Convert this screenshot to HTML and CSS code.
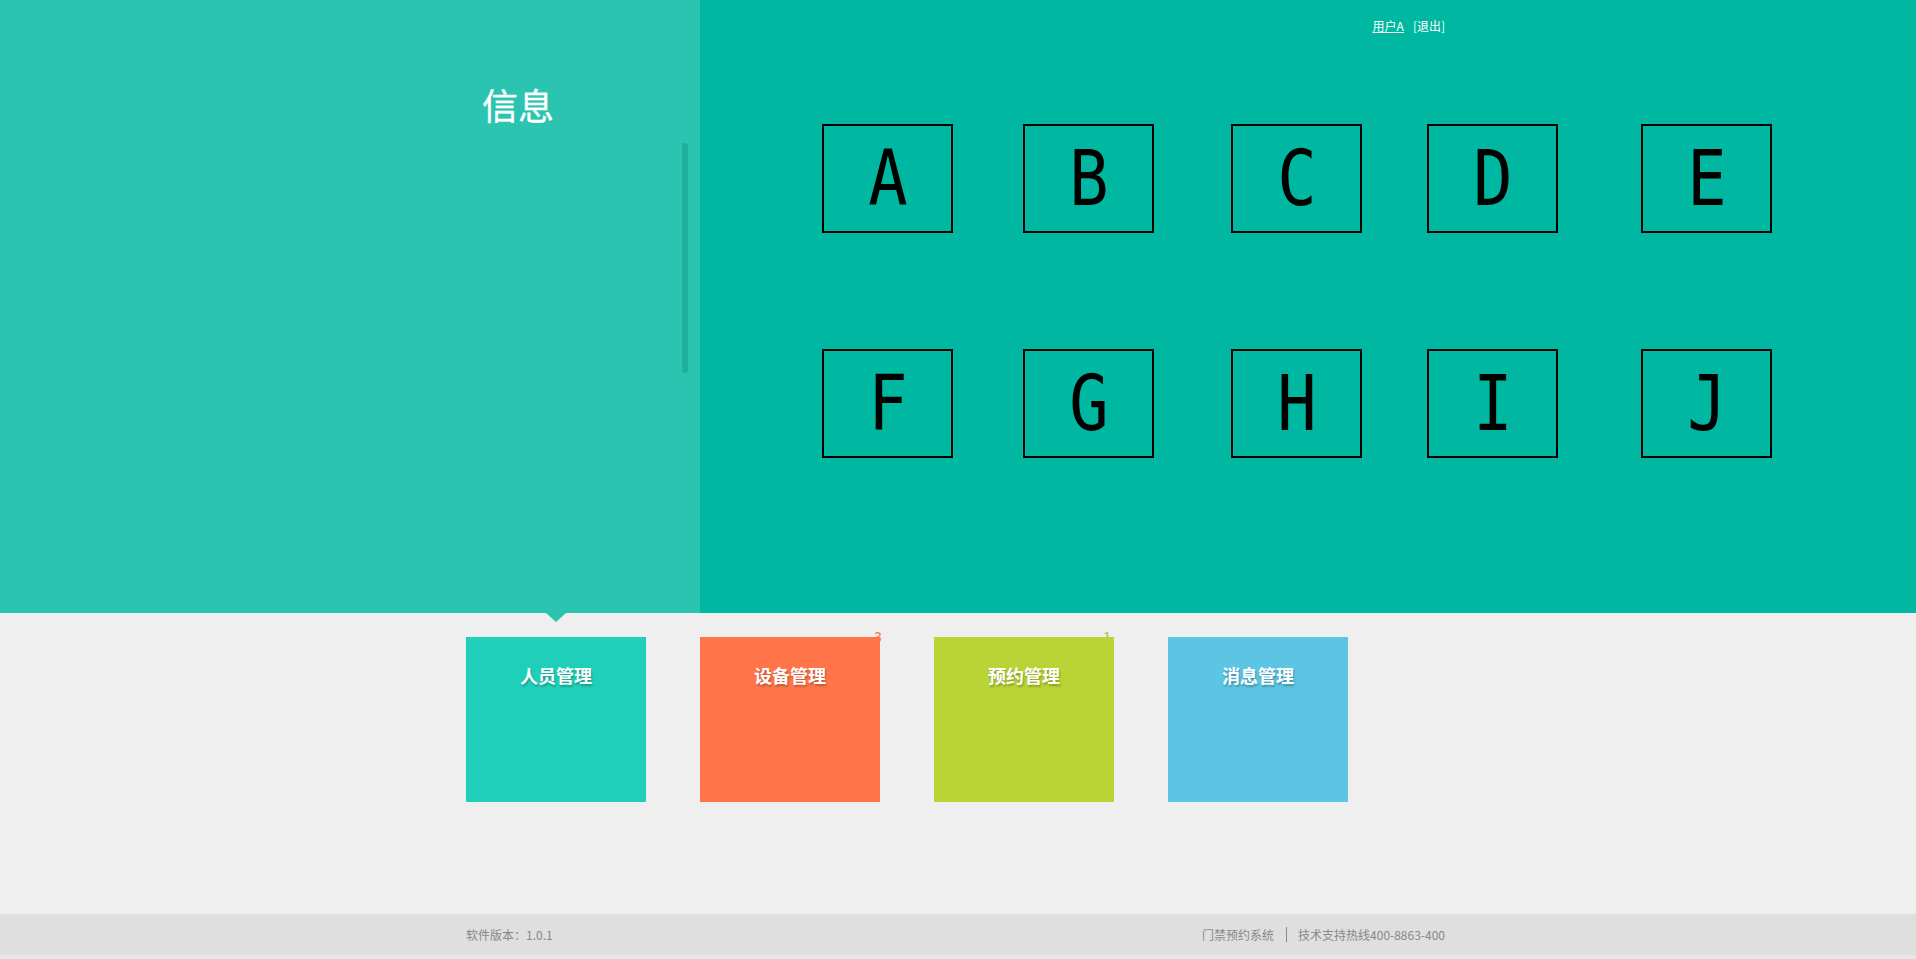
FILE: index.html
```html
<!DOCTYPE html>
<html lang="zh-CN">
<head>
<meta charset="utf-8">
<title>门禁预约系统</title>
<link rel="stylesheet" href="styles.css">
</head>
<body>
<div class="top">
  <div class="info-panel">
    <h1 class="info-title">信息</h1>
    <div class="scroll-thumb"></div>
  </div>
  <div class="main-panel">
    <div class="user-bar">
      <a class="user-name" href="#">用户A</a>
      <a class="logout" href="#">[退出]</a>
    </div>
    <div class="door-grid">
      <div class="door"><span class="door-label">A</span></div>
      <div class="door"><span class="door-label">B</span></div>
      <div class="door"><span class="door-label">C</span></div>
      <div class="door"><span class="door-label">D</span></div>
      <div class="door"><span class="door-label">E</span></div>
      <div class="door"><span class="door-label">F</span></div>
      <div class="door"><span class="door-label">G</span></div>
      <div class="door"><span class="door-label">H</span></div>
      <div class="door"><span class="door-label">I</span></div>
      <div class="door"><span class="door-label">J</span></div>
    </div>
  </div>
</div>
<div class="menu">
  <div class="pointer"></div>
  <div class="tiles">
    <div class="tile tile-people"><span class="tile-title">人员管理</span></div>
    <div class="tile tile-device"><span class="badge badge-device">3</span><span class="tile-title">设备管理</span></div>
    <div class="tile tile-booking"><span class="badge badge-booking">1</span><span class="tile-title">预约管理</span></div>
    <div class="tile tile-message"><span class="tile-title">消息管理</span></div>
  </div>
</div>
<div class="footer">
  <div class="footer-inner">
    <span class="version">软件版本：1.0.1</span>
    <span class="support"><span>门禁预约系统</span><span class="sep"></span><span>技术支持热线400-8863-400</span></span>
  </div>
</div>
</body>
</html>
```

FILE: styles.css
```css
html, body {
  margin: 0;
  padding: 0;
}
body {
  background: #efefef;
  font-family: "Noto Sans CJK SC", "Noto Sans", sans-serif;
  width: 1916px;
}
.top {
  display: flex;
  height: 613px;
}
.info-panel {
  position: relative;
  width: 700px;
  background: #2bc4b0;
  box-sizing: border-box;
  padding-left: 482px;
  padding-top: 80px;
}
.info-title {
  margin: 0;
  font-size: 36px;
  font-weight: normal;
  line-height: 48px;
  color: #ffffff;
  -webkit-text-stroke: 0.3px #ffffff;
}
.scroll-thumb {
  position: absolute;
  left: 682px;
  top: 143px;
  width: 6px;
  height: 230px;
  border-radius: 3px;
  background: #23ad9c;
}
.main-panel {
  flex: 1;
  background: #00b7a1;
}
.user-bar {
  height: 54px;
  box-sizing: border-box;
  padding-top: 17px;
  padding-right: 471px;
  display: flex;
  justify-content: flex-end;
  gap: 9px;
  font-size: 12px;
  line-height: 18px;
}
.user-bar a {
  color: #ffffff;
}
.user-bar .logout {
  text-decoration: none;
}
.door-grid {
  display: grid;
  grid-template-columns: 201px 208px 196px 214px 131px;
  grid-template-rows: 109px 109px;
  row-gap: 116px;
  margin-top: 70px;
  margin-left: 122px;
}
.door {
  width: 131px;
  height: 109px;
  box-sizing: border-box;
  border: 2px solid #000000;
  display: flex;
  align-items: center;
  justify-content: center;
}
.door-label {
  display: inline-block;
  font-family: "DejaVu Sans Mono", monospace;
  font-size: 76px;
  line-height: 1;
  color: #000000;
  transform: scaleX(0.86);
}
.menu {
  position: relative;
  height: 301px;
}
.pointer {
  position: absolute;
  left: 546px;
  top: 0;
  width: 0;
  height: 0;
  border-left: 10px solid transparent;
  border-right: 10px solid transparent;
  border-top: 9px solid #2bc4b0;
}
.tiles {
  width: 984px;
  margin: 0 auto;
  padding-top: 24px;
  display: flex;
  gap: 54px;
}
.tile {
  position: relative;
  width: 180px;
  height: 165px;
  box-sizing: border-box;
  padding-top: 26px;
  text-align: center;
}
.tile-title {
  font-size: 18px;
  font-weight: bold;
  line-height: 24px;
  color: #ffffff;
  text-shadow: 1px 2px 2px rgba(0, 0, 0, 0.25);
}
.tile-people { background: #1fcfb9; }
.tile-device { background: #ff7549; }
.tile-booking { background: #bad335; }
.tile-message { background: #5bc5e3; }
.badge {
  position: absolute;
  top: -8px;
  right: -2px;
  z-index: -1;
  font-size: 13px;
  font-weight: bold;
  line-height: 16px;
  opacity: 0.8;
}
.badge-device { color: #f07a55; }
.badge-booking { color: #a8c040; right: 3px; }
.footer {
  height: 41px;
  background: #dfdfdf;
  border-bottom: 4px solid #e7e7e7;
}
.footer-inner {
  width: 984px;
  margin: 0 auto;
  box-sizing: border-box;
  padding-right: 5px;
  height: 41px;
  display: flex;
  align-items: center;
  justify-content: space-between;
  font-size: 12px;
  color: #888888;
}
.support {
  display: flex;
  align-items: center;
}
.sep {
  display: inline-block;
  width: 1px;
  height: 15px;
  background: #8a8a8a;
  margin: 0 11px 0 12px;
}
```
